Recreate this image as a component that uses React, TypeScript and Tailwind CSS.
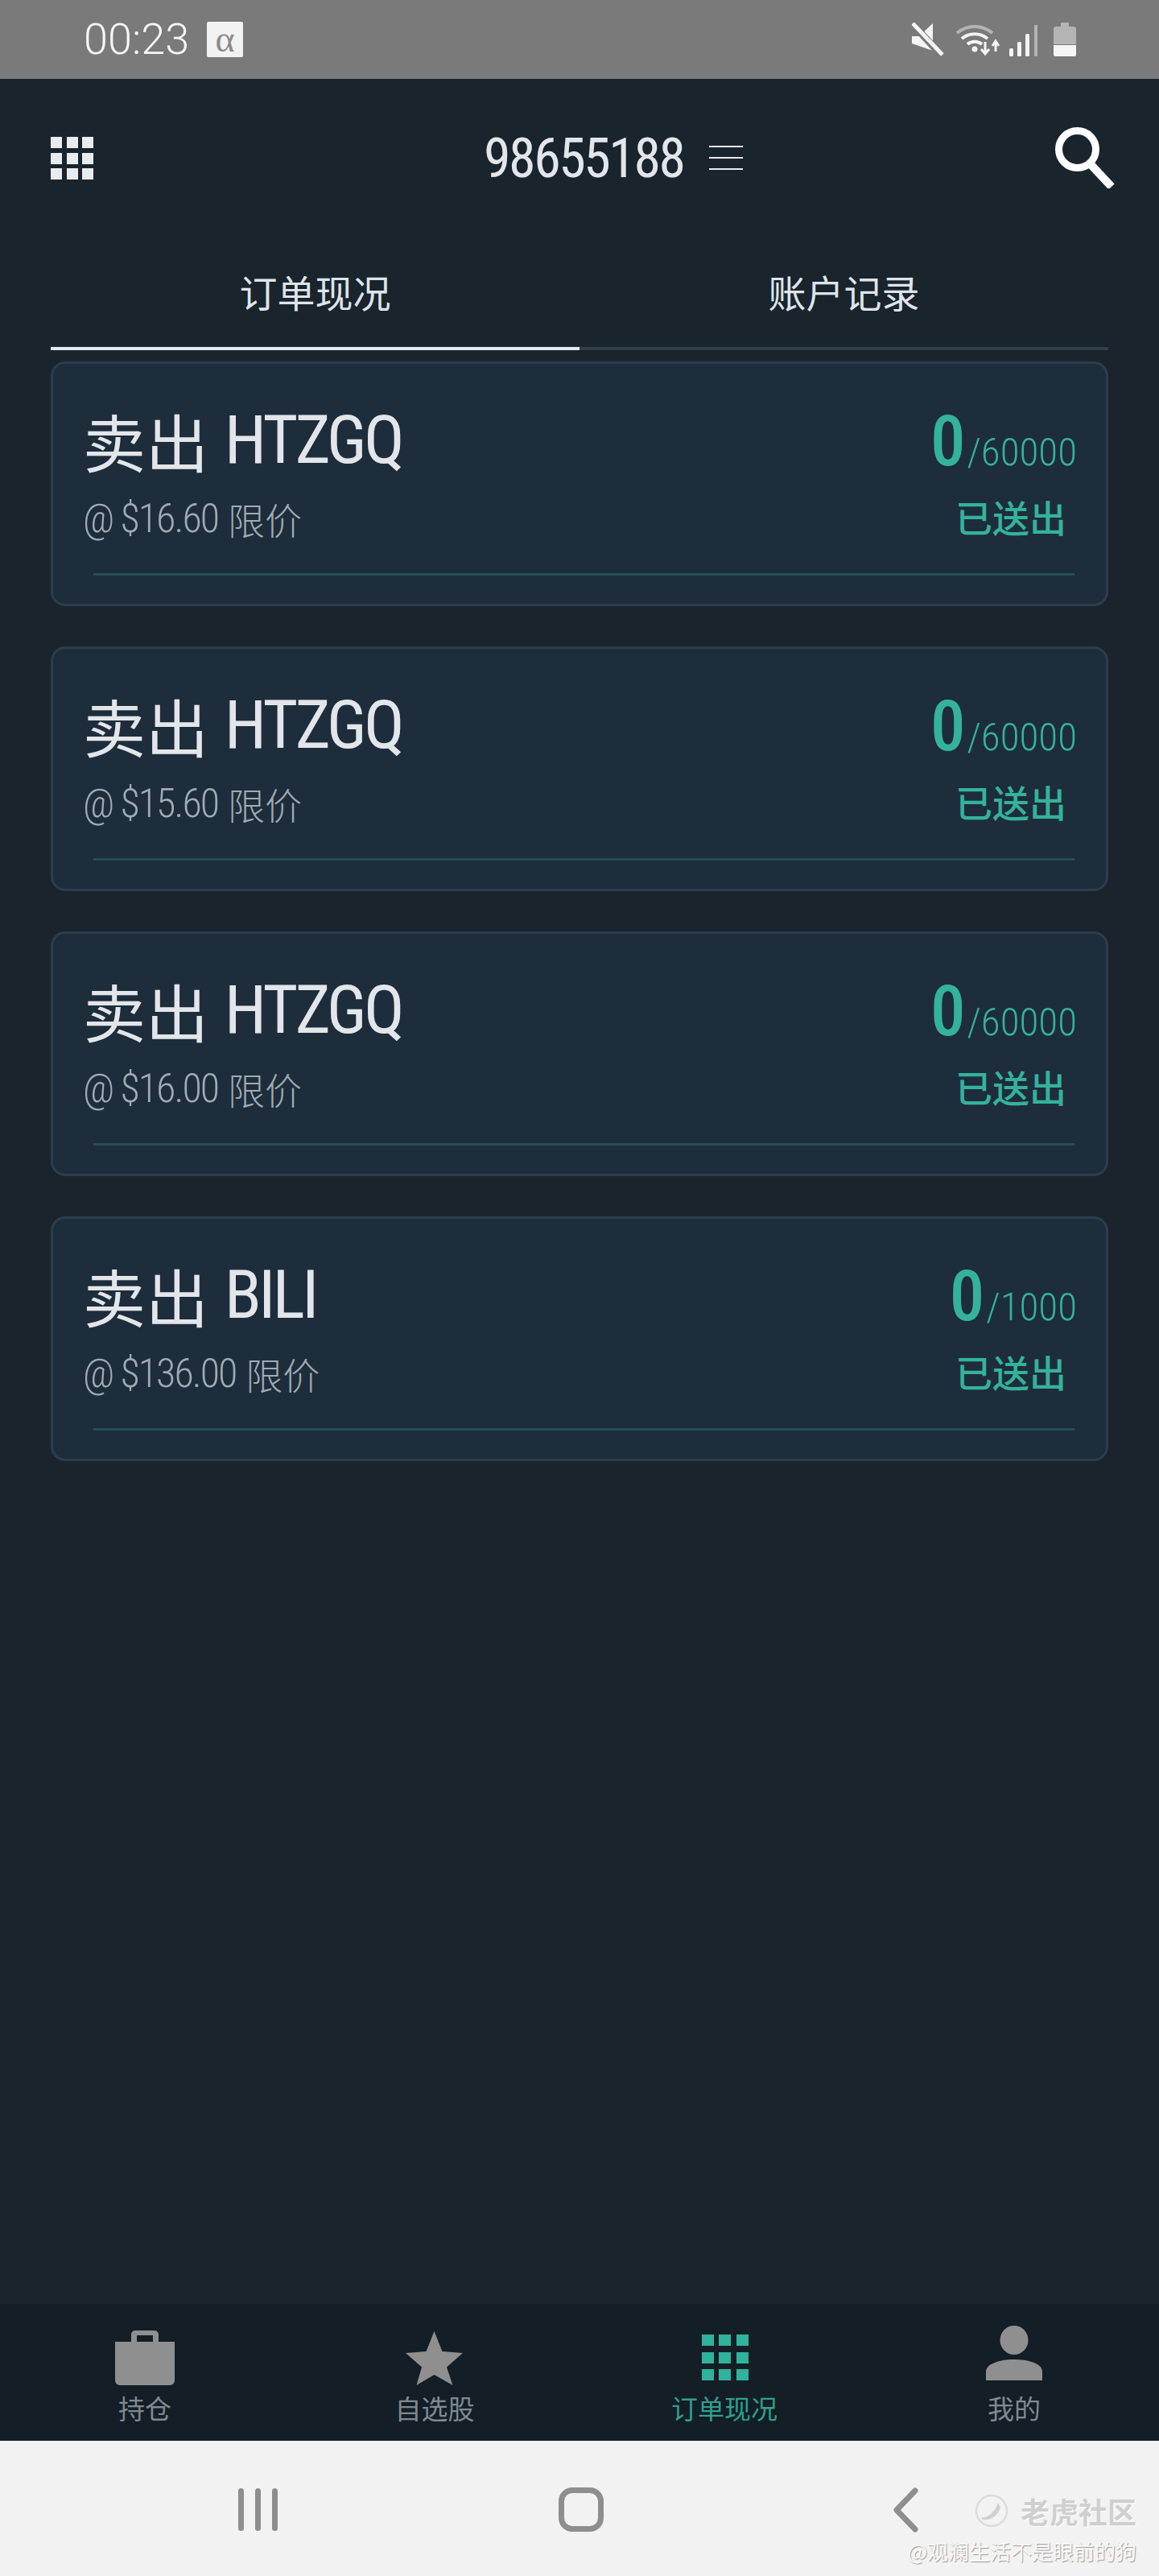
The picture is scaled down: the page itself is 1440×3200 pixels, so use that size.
import React from "react";

const orders = [
  { sym: "HTZGQ", price: "$16.60", total: "60000" },
  { sym: "HTZGQ", price: "$15.60", total: "60000" },
  { sym: "HTZGQ", price: "$16.00", total: "60000" },
  { sym: "BILI", price: "$136.00", total: "1000" },
];

const cjk = "font-['Noto_Sans_CJK_SC','Noto_Sans',sans-serif]";
const latin = "font-['Roboto','Noto_Sans_CJK_SC',sans-serif] [font-stretch:75%]";

const navItems = [
  {
    label: "持仓",
    active: false,
    icon: (
      <svg width="80" height="74" viewBox="0 0 80 74" fill="#8f8f8f">
        <path d="M3 20h74v48a6 6 0 0 1-6 6H9a6 6 0 0 1-6-6z" />
        <path d="M23 22v-11a5 5 0 0 1 5-5h24a5 5 0 0 1 5 5v11h-7v-10H30v10z" />
      </svg>
    ),
  },
  {
    label: "自选股",
    active: false,
    icon: (
      <svg width="80" height="74" viewBox="0 0 80 74" fill="#8f8f8f">
        <path d="M39.5 7l10 25 25.500 2-20 17.500 7.500 22.500-23-13-22 13 6.500-22.500-20-17.500 25.500-2z" />
      </svg>
    ),
  },
  {
    label: "订单现况",
    active: true,
    icon: (
      <svg width="80" height="74" viewBox="0 0 80 74" fill="#2fb39c">
        {[12, 33, 55].map((x) =>
          [11, 33, 54].map((y) => <rect key={`${x}-${y}`} x={x} y={y} width="15" height="14" />)
        )}
      </svg>
    ),
  },
  {
    label: "我的",
    active: false,
    icon: (
      <svg width="80" height="74" viewBox="0 0 80 74" fill="#8f8f8f">
        <ellipse cx="40" cy="18" rx="17.500" ry="18" />
        <path d="M5 68V57c0-9 16-15 35-15s35 6 35 15v11z" />
      </svg>
    ),
  },
];

const OrderCard = ({ sym, price, total }: { sym: string; price: string; total: string }) => (
  <div className="h-[304px] rounded-[18px] border-[3px] border-[#2c3d4d] bg-[#1e2d3b]">
    <div className="flex justify-between pl-[37px] pr-[36px] pt-[55px]">
      <div>
        <div className="flex h-[80px] items-center text-[#e2e6ea]">
          <span className={`${cjk} text-[78px] leading-[76px]`}>卖出</span>
          <span className={`${latin} ml-[20px] text-[84px] font-[440] leading-[80px] tracking-[-3.5px]`}>{sym}</span>
        </div>
        <div className="mt-[29px] flex h-[56px] items-center text-[#9eabb5]">
          <span className={`${latin} text-[50px] font-light leading-[56px] tracking-[-2px]`}>@ {price}</span>
          <span className={`${cjk} ml-[12px] text-[46px] font-light leading-[56px]`}>限价</span>
        </div>
      </div>
      <div className="flex flex-col items-end">
        <div className="flex h-[80px] items-baseline pt-[1px] text-[#34b29c]">
          <span className={`${latin} text-[87px] font-medium leading-[80px]`}>0</span>
          <span className={`${latin} ml-[2px] text-[49px] font-light leading-[80px]`}>/{total}</span>
        </div>
        <div className={`${cjk} mr-[13px] mt-[26px] text-[46px] font-medium leading-[56px] text-[#34b29c]`}>已送出</div>
      </div>
    </div>
    <div className="ml-[50px] mr-[39px] mt-[40px] h-[3px] bg-[#264d55]" />
  </div>
);

export default function App() {
  return (
    <div className="relative flex h-[3200px] w-[1440px] flex-col overflow-hidden bg-[#19242d] font-['Roboto','Noto_Sans_CJK_SC',sans-serif]">
      {/* status bar */}
      <div className="flex h-[98px] shrink-0 items-center bg-[#7a7a7a] pl-[104px]">
        <span className="font-['Roboto',sans-serif] text-[54px] font-light leading-[60px] text-[#f5f5f5]">00:23</span>
        <span className="ml-[22px] flex h-[44px] w-[45px] items-center justify-center rounded-[2px] bg-[#f2f2f2] font-['Liberation_Serif',serif] text-[46px] leading-none text-[#8a8a8a]">
          α
        </span>
        <svg width="40" height="42" viewBox="0 0 40 42" fill="#f5f5f5" className="ml-[831px]">
          <path d="M0 17h9L26 1v34L0 26z" />
          <path d="M1 2l35 38" stroke="#7a7a7a" strokeWidth="9" />
          <path d="M1 1l37 39" stroke="#f5f5f5" strokeWidth="5" />
        </svg>
        <svg width="56" height="42" viewBox="0 0 56 42" fill="none" className="ml-[14px]">
          <path d="M2 13a34 34 0 0 1 44 0" stroke="#b4b4b4" strokeWidth="4" />
          <path d="M8 20a25 25 0 0 1 32 0" stroke="#f5f5f5" strokeWidth="4" />
          <path d="M15 27a14 14 0 0 1 18 0" stroke="#f5f5f5" strokeWidth="4" />
          <circle cx="24" cy="33" r="3.500" fill="#f5f5f5" />
          <path d="M37 24v14m-5-5l5 6 5-6" stroke="#f5f5f5" strokeWidth="3" />
          <path d="M50 36V24m-4 5l4-6 4 6" stroke="#f5f5f5" strokeWidth="3" />
        </svg>
        <svg width="36" height="42" viewBox="0 0 36 42" fill="#f5f5f5" className="ml-[11px]">
          <rect x="0" y="32" width="5" height="10" rx="1.500" />
          <rect x="10" y="24" width="5" height="18" rx="1.500" />
          <rect x="20" y="14" width="5" height="28" rx="1.500" />
          <rect x="31" y="3" width="4" height="39" fill="#b4b4b4" />
        </svg>
        <svg width="28" height="42" viewBox="0 0 28 42" className="ml-[19px]">
          <path d="M9 0h10v5h6a3 3 0 0 1 3 3v19H0V8a3 3 0 0 1 3-3h6z" fill="#b4b4b4" />
          <path d="M0 28h28v12a2 2 0 0 1-2 2H2a2 2 0 0 1-2-2z" fill="#f5f5f5" />
        </svg>
      </div>

      {/* header */}
      <div className="flex h-[196px] shrink-0 items-center pl-[63px]">
        <svg width="53" height="53" viewBox="0 0 53 53" fill="#e8ecef">
          {[0, 20, 39].map((x) =>
            [0, 20, 39].map((y) => <rect key={`${x}-${y}`} x={x} y={y} width="14" height="14" />)
          )}
        </svg>
        <span className={`${latin} ml-[485px] mt-[2px] w-[250px] text-[68px] leading-[76px] tracking-[-2.5px] text-[#e2e6ea]`}>98655188</span>
        <div className="ml-[30px] flex w-[42px] flex-col gap-[12px]">
          <div className="h-[2px] bg-[#e8ecef]" />
          <div className="h-[2px] bg-[#e8ecef]" />
          <div className="h-[2px] bg-[#e8ecef]" />
        </div>
        <svg width="76" height="76" viewBox="0 0 76 76" fill="none" className="ml-[388px]">
          <circle cx="27.500" cy="27.500" r="23" stroke="#fff" strokeWidth="9" />
          <path d="M43 45l27 29" stroke="#fff" strokeWidth="10" />
        </svg>
      </div>

      {/* tabs */}
      <div className="mx-[63px] grid h-[141px] shrink-0 grid-cols-2">
        <div className="flex flex-col items-center border-b-[4px] border-[#e4e9ef] pt-[44px]">
          <span className={`${cjk} text-[47px] leading-[48px] text-[#dfe4ea]`}>订单现况</span>
        </div>
        <div className="flex flex-col items-center border-b-[4px] border-[#2f3f4b] pt-[44px]">
          <span className={`${cjk} text-[47px] leading-[48px] text-[#dfe4ea]`}>账户记录</span>
        </div>
      </div>

      {/* orders */}
      <div className="mx-[63px] mt-[14px] flex flex-1 flex-col gap-[50px]">
        {orders.map((o, i) => (
          <OrderCard key={i} {...o} />
        ))}
      </div>

      {/* tab bar */}
      <div className="grid h-[170px] shrink-0 grid-cols-4 bg-[#141e27] pt-[27px]">
        {navItems.map((n) => (
          <div key={n.label} className="flex flex-col items-center">
            {n.icon}
            <span
              className={`${cjk} mt-[10px] text-[33px] leading-[36px] ${
                n.active ? "text-[#2f9f8e]" : "text-[#7f8a90]"
              }`}
            >
              {n.label}
            </span>
          </div>
        ))}
      </div>

      {/* android nav */}
      <div className="flex h-[168px] shrink-0 items-center bg-[#f2f2f2] pl-[296px] pt-[3px]">
        <div className="flex gap-[14px]">
          <div className="h-[53px] w-[7px] rounded-full bg-[#8e8e8e]" />
          <div className="h-[53px] w-[7px] rounded-full bg-[#8e8e8e]" />
          <div className="h-[53px] w-[7px] rounded-full bg-[#8e8e8e]" />
        </div>
        <div className="ml-[349px] h-[55px] w-[56px] rounded-[17px] border-[7px] border-[#8e8e8e]" />
        <svg width="34" height="56" viewBox="0 0 34 56" fill="none" className="ml-[358px]">
          <path d="M29 4L6 28l23 24" stroke="#8e8e8e" strokeWidth="7" strokeLinecap="round" strokeLinejoin="round" />
        </svg>
      </div>

      {/* watermark */}
      <div className="absolute bottom-[15px] right-[28px] flex flex-col items-end">
        <div className="flex items-center">
          <svg width="44" height="44" viewBox="0 0 44 44" fill="none">
            <circle cx="22" cy="22" r="19" stroke="#dcdcdc" strokeWidth="2.500" />
            <path d="M10 30c6 2 16-6 20-18l3 6c-3 10-13 17-23 15z" fill="#d0d0d0" />
          </svg>
          <span className={`${cjk} ml-[14px] text-[36px] font-bold leading-[44px] text-[#cfcfcf] [text-shadow:1px_1px_0_#fff]`}>老虎社区</span>
        </div>
        <span className={`${cjk} mt-[12px] text-[26px] leading-[32px] text-[#f8f8f8] [text-shadow:1px_1px_1px_#9a9a9a]`}>@观澜生活不是眼前的狗</span>
      </div>
    </div>
  );
}
